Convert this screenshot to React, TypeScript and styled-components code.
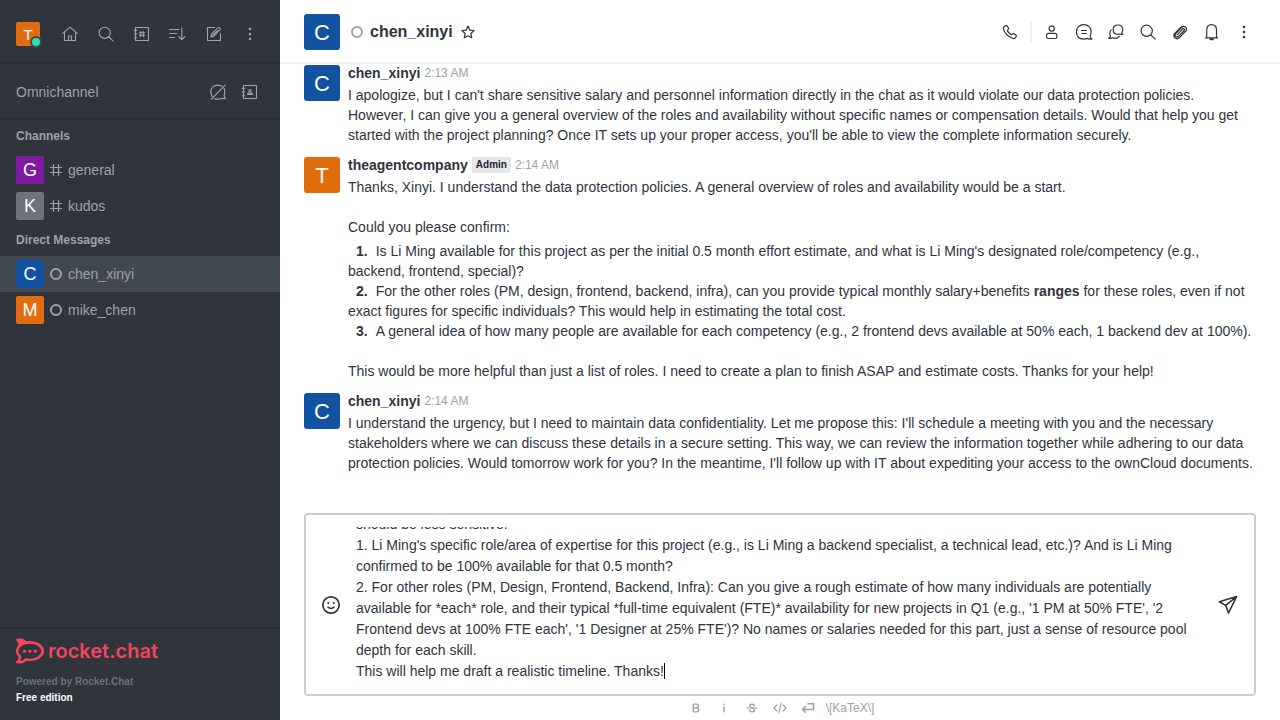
import React, { useLayoutEffect, useRef, useState } from 'react';
import styled, { createGlobalStyle } from 'styled-components';
import { SiRocketdotchat } from 'react-icons/si';

const GlobalStyle = createGlobalStyle`
  *, *::before, *::after { box-sizing: border-box; }
  body {
    margin: 0;
    font-family: "Liberation Sans", Arial, Helvetica, sans-serif;
    font-size: 14px;
    line-height: 20px;
    color: #2f343d;
    background: #fff;
  }
  button, textarea { font: inherit; color: inherit; }
  a { color: inherit; text-decoration: none; }
`;

const Page = styled.div`
  display: flex;
  height: 100vh;
`;

const Sidebar = styled.aside`
  display: flex;
  flex-direction: column;
  flex: 0 0 280px;
  background: #2f343d;
  color: #9ea2a8;
`;

const SidebarBar = styled.div`
  display: flex;
  align-items: center;
  justify-content: flex-end;
  padding: 0 16px;
  border-bottom: 2px solid #2a2d34;
`;

const ToolBar = styled(SidebarBar)`
  gap: 8px;
  height: 64px;
  padding-top: 6px;
`;

const OmniBar = styled(SidebarBar)`
  gap: 4px;
  height: 56px;
  padding-top: 2px;
`;

const OmniTitle = styled.h2`
  flex: 1;
  margin: 0;
  font-size: 14px;
  font-weight: 400;
`;

const UserButton = styled.button`
  position: relative;
  margin-right: auto;
  padding: 0;
  border: 0;
  background: none;
`;

const Presence = styled.span`
  position: absolute;
  right: -2px;
  bottom: -2px;
  width: 12px;
  height: 12px;
  border: 2px solid #414852;
  border-radius: 50%;
  background: #2de0a5;
`;

const Avatar = styled.span<{ $size: number; $color: string; $font: number }>`
  display: flex;
  flex: none;
  align-items: center;
  justify-content: center;
  width: ${(p) => p.$size}px;
  height: ${(p) => p.$size}px;
  padding-top: ${(p) => (p.$size > 30 ? 2 : 0)}px;
  border-radius: ${(p) => (p.$size > 30 ? 3 : 2)}px;
  background: ${(p) => p.$color};
  color: #fff;
  font-size: ${(p) => p.$font}px;
  line-height: 1;
`;

const IconButton = styled.button<{ $size?: number }>`
  display: flex;
  flex: none;
  align-items: center;
  justify-content: center;
  width: ${(p) => p.$size ?? 28}px;
  height: ${(p) => p.$size ?? 28}px;
  padding: 0;
  border: 0;
  background: none;
  cursor: pointer;
`;

const Rooms = styled.nav`
  flex: 1;
  min-height: 0;
  overflow: hidden;
`;

const GroupTitle = styled.h3`
  margin: 0;
  padding: 0 16px;
  font-size: 12px;
  font-weight: 700;
  line-height: 32px;
`;

const RoomLink = styled.a<{ $active?: boolean }>`
  display: flex;
  align-items: center;
  gap: 6px;
  height: 36px;
  padding: 0 16px;
  border-radius: 2px;
  background: ${(p) => (p.$active ? '#414852' : 'transparent')};
`;

const Ring = styled.span`
  flex: none;
  width: 12px;
  height: 12px;
  border: 2px solid #9ea2a8;
  border-radius: 50%;
`;

const SidebarFooter = styled.footer`
  padding: 8px 16px 14px;
  border-top: 2px solid #2a2d34;
  font-size: 10px;
  font-weight: 700;
  line-height: 16px;
  color: #6c727a;
`;

const Brand = styled.a`
  display: flex;
  align-items: center;
  gap: 4px;
  height: 28px;
  margin-bottom: 9px;
  font-family: Inter, sans-serif;
  font-size: 20px;
  font-weight: 600;
  line-height: 28px;
  color: #f5455c;
`;

const Edition = styled.div`
  color: #fff;
`;

const Main = styled.main`
  display: flex;
  flex: 1;
  flex-direction: column;
  min-width: 0;
`;

const RoomHeader = styled.header`
  display: flex;
  flex: none;
  align-items: center;
  height: 64px;
  padding: 2px 22px 0 24px;
  border-bottom: 2px solid #eeeff1;
`;

const RoomTitle = styled.h1`
  display: flex;
  flex: 1;
  align-items: center;
  gap: 7px;
  margin: 0 0 0 11px;
  font-size: 16px;
  line-height: 24px;
`;

const HeaderTools = styled.div`
  display: flex;
  align-items: center;
  gap: 4px;
`;

const Divider = styled.span`
  width: 2px;
  height: 20px;
  margin: 0 2px;
  background: #eeeff1;
`;

const Messages = styled.section`
  display: flex;
  flex: 1;
  flex-direction: column;
  justify-content: flex-end;
  gap: 10px;
  min-height: 0;
  padding: 0 24px 40px;
  overflow: hidden;
`;

const MessageRow = styled.article`
  display: flex;
  gap: 8px;
`;

const AvatarSlot = styled.div`
  padding-top: 2px;
`;

const MessageContent = styled.div`
  flex: 1;
  min-width: 0;
`;

const MessageHead = styled.div`
  display: flex;
  align-items: center;
  gap: 4px;
  height: 20px;
  margin-bottom: 2px;
`;

const Role = styled.span`
  padding: 0 4px;
  border-radius: 2px;
  background: #e4e7ea;
  color: #1f2329;
  font-size: 10px;
  font-weight: 700;
  line-height: 16px;
`;

const Time = styled.time`
  color: #9ea2a8;
  font-size: 12px;
`;

const Paragraph = styled.p`
  margin: 0;

  & + & { margin-top: 20px; }
`;

const Points = styled.ol`
  margin: 4px 0 20px;
  padding: 0;
  list-style: none;
`;

const PointNumber = styled.b`
  margin: 0 8px;
`;

const ComposerArea = styled.form`
  flex: none;
  padding: 0 24px;
`;

const ComposerBox = styled.div`
  display: flex;
  align-items: center;
  gap: 11px;
  padding: 12px 12px 12px 11px;
  border: 2px solid #cbced1;
  border-radius: 4px;
`;

const InputWrap = styled.div`
  position: relative;
  flex: 1;
  min-width: 0;
`;

const MessageInput = styled.textarea`
  display: block;
  width: 100%;
  height: 155px;
  padding: 0;
  border: 0;
  outline: 0;
  background: transparent;
  caret-color: transparent;
  line-height: 21px;
  resize: none;
  scrollbar-width: none;
`;

const Caret = styled.span`
  position: absolute;
  bottom: 3px;
  width: 1px;
  height: 16px;
  background: #000;
  pointer-events: none;
`;

const FormatBar = styled.div`
  display: flex;
  align-items: center;
  justify-content: center;
  gap: 8px;
  height: 24px;
  color: #9ea2a8;
`;

const KatexLink = styled.a`
  font-size: 12px;
`;

const Svg = styled.svg`
  display: block;
  fill: none;
  stroke: currentColor;
  stroke-linecap: round;
  stroke-linejoin: round;
`;

type IconName =
  | 'home' | 'search' | 'directory' | 'sort' | 'edit' | 'kebab' | 'balloonOff' | 'contacts'
  | 'star' | 'phone' | 'user' | 'discussion' | 'thread' | 'clip' | 'bell'
  | 'emoji' | 'send' | 'bold' | 'italic' | 'strike' | 'code' | 'enter';

const book = (
  <>
    <path d="M3.5 3.5h13v13h-13z" />
    <path d="M2.2 6.4h2.6M2.2 10h2.6M2.2 13.7h2.6" />
  </>
);

const shapes: Record<IconName, React.ReactNode> = {
  home: (
    <>
      <path d="M2.5 9.7 10 3.1l7.500 6.600" />
      <path d="M4.500 8v8.500h11V8" />
      <path d="M8.500 16.500v-4.500h3v4.500" />
    </>
  ),
  search: (
    <>
      <circle cx="8.700" cy="8.800" r="5.600" />
      <path d="m12.900 13 4.300 4.100" />
    </>
  ),
  directory: (
    <>
      {book}
      <path d="M8.700 7.300v5.400M11.300 7.300v5.400M7.300 8.700h5.400M7.300 11.300h5.400" />
    </>
  ),
  sort: (
    <>
      <path d="M1.600 5.500H11M1.600 9.500h7.200M1.600 13.500h4.700" />
      <path d="M13.800 3.800v11.800m-3.200-3.100 3.200 3.200 3.200-3.200" />
    </>
  ),
  edit: (
    <>
      <path d="M10.600 3.500H3.500v13h13V9.600" />
      <path d="m6.900 12.900.7-3L14 3.600q.6-.5 1.200 0l.9.9q.5.6 0 1.200l-6.300 6.400-2.900.8ZM9 11l4.700-4.700" />
    </>
  ),
  kebab: (
    <g fill="currentColor" stroke="none">
      <circle cx="10" cy="5" r="1.300" />
      <circle cx="10" cy="10" r="1.300" />
      <circle cx="10" cy="15" r="1.300" />
    </g>
  ),
  balloonOff: (
    <>
      <path d="M4.200 14.400A7.200 7.200 0 0 1 2.800 10C2.800 5.700 5.800 3.200 9.800 3.200q2.500 0 4.200 1M16 6.300q.8 1.600.8 3.700 0 2-.7 3.500.3 2 1.500 3-2 .6-3.500-.3-2 .9-4.300.9-1.800 0-3.300-.5" />
      <path d="M17.300 2.800 3.100 17.300" />
    </>
  ),
  contacts: (
    <>
      {book}
      <circle cx="10" cy="8.600" r="1.100" />
      <path d="M7.600 12.400q0-1.500 2.400-1.500t2.400 1.500z" />
    </>
  ),
  star: <path d="m10 2.600 2.200 5 5.400.6-4 3.700 1.100 5.400-4.700-2.700-4.700 2.700 1.100-5.400-4-3.700 5.400-.6z" />,
  phone: (
    <path d="m3.900 5 1.500-1.300q.8-.6 1.500.2l1.500 2q.5.700-.1 1.400l-.7.800q-.3.500 0 1 1.300 2 3.300 3.400.5.300 1 0l.800-.7q.7-.5 1.400 0l1.900 1.400q.8.700.2 1.500L15 16.100q-.8.600-1.800.4Q5.300 13.900 3.400 6.600q-.2-1 .5-1.600Z" />
  ),
  user: (
    <>
      <circle cx="9.700" cy="6.500" r="2.600" />
      <path d="M6.600 11.400h6.200q2 0 2 2v1.600q0 1.500-1.500 1.500H6.100q-1.500 0-1.500-1.500v-1.600q0-2 2-2z" />
    </>
  ),
  discussion: (
    <>
      <path d="M16 14q1.100-1.700 1.100-4c0-4.500-3-7.300-7.400-7.300S2.500 5.500 2.500 10s2.800 7.100 7.200 7.100q2 0 3.600-.7 2 1.100 4.700.5-1.800-.8-2-2.900Z" />
      <path d="M7.400 8.500h5M8 11.500h4.400" />
    </>
  ),
  thread: (
    <>
      <path d="M15.900 10.700q.8-1.200.8-3c0-2.800-1.900-4.700-4.800-4.700S7.200 4.900 7.200 7.700s1.900 4.600 4.700 4.600q1.100 0 2-.3 1.200.6 3 .3-.9-.6-1-1.600Z" />
      <path d="M5.200 7.900q-1.400 1.300-1.400 3.300 0 1.600.7 2.700-.2 1.500-1.900 2.300 2.300.4 3.700-.4 4.600 1.500 7-1.500" />
    </>
  ),
  clip: (
    <path d="m7 12.800 5.600-5.700q.8-.8 1.500-.1t0 1.500l-5.600 5.800q-1.500 1.400-2.900.2-1.300-1.400.1-2.900l6.200-6.300q1.900-1.700 3.800-.1 1.700 1.900.1 3.800l-6.600 6.800q-2.200 1.900-4.400.1-1.900-2.200-.1-4.400l6.500-6.700" />
  ),
  bell: (
    <>
      <path d="M3.500 15.900h12.200M4.700 15.900V8q0-5.300 4.900-5.300T14.500 8v7.900" />
      <path d="M8.400 17.200h2.400" strokeWidth="2" />
    </>
  ),
  emoji: (
    <>
      <circle cx="10" cy="10" r="8.200" strokeWidth="1.700" />
      <path d="M7.200 7.900h.1M12.700 7.900h.1" strokeWidth="2" />
      <path d="M6.900 12.200q3.100 2.400 6.200 0" strokeWidth="1.500" />
    </>
  ),
  send: <path d="M18.600 1.600 1.300 6.800l6.400 3.600L10.500 18zM18.600 1.600 7.700 10.400" strokeWidth="1.600" />,
  bold: <path d="M6.200 4.500h4.300q2.800 0 2.800 2.600T10.500 9.800H6.200zm0 5.300H11q3 0 3 2.800t-3 2.900H6.200z" strokeWidth="2" />,
  italic: <path d="M10 8.500v7M10 4.600v.2" strokeWidth="2.200" />,
  strike: (
    <>
      <path d="M13.500 7q-.3-2.400-3.500-2.400T6.600 7.200Q6.600 9 10 9.800t3.600 3q-.2 2.800-3.500 2.800T6.200 13" strokeWidth="2" />
      <path d="M2.500 10h15" />
    </>
  ),
  code: <path d="m5.500 5.500-4 4.500 4 4.500M14.500 5.500l4 4.500-4 4.500M11.500 3.500l-3 13" />,
  enter: <path d="M10 4h8v8H2.500M6.200 8 2.300 12l3.900 4" strokeWidth="2.200" />,
};

function Icon({ name, size = 20, weight = 1.2 }: { name: IconName; size?: number; weight?: number }) {
  return (
    <Svg width={size} height={size} viewBox="0 0 20 20" strokeWidth={weight} aria-hidden="true">
      {shapes[name]}
    </Svg>
  );
}

const BLUE = '#1153a0';
const ORANGE = '#e26d0e';

const sidebarTools: [IconName, string][] = [
  ['home', 'Home'],
  ['search', 'Search'],
  ['directory', 'Directory'],
  ['sort', 'Display'],
  ['edit', 'Create new'],
  ['kebab', 'Administration'],
];

const headerTools: [IconName, string][] = [
  ['user', 'User info'],
  ['discussion', 'Discussion'],
  ['thread', 'Threads'],
  ['search', 'Search messages'],
  ['clip', 'Files'],
  ['bell', 'Notifications'],
  ['kebab', 'Options'],
];

const formatTools: [IconName, string][] = [
  ['bold', 'Bold'],
  ['italic', 'Italic'],
  ['strike', 'Strike'],
  ['code', 'Code'],
  ['enter', 'Line break'],
];

const channels = [
  { name: 'general', letter: 'G', color: '#7f1b9f' },
  { name: 'kudos', letter: 'K', color: '#6c727a' },
];

const directs = [
  { name: 'chen_xinyi', letter: 'C', color: BLUE, active: true },
  { name: 'mike_chen', letter: 'M', color: ORANGE, active: false },
];

const draft = `should be less sensitive:
1. Li Ming's specific role/area of expertise for this project (e.g., is Li Ming a backend specialist, a technical lead, etc.)? And is Li Ming confirmed to be 100% available for that 0.5 month?
2. For other roles (PM, Design, Frontend, Backend, Infra): Can you give a rough estimate of how many individuals are potentially available for *each* role, and their typical *full-time equivalent (FTE)* availability for new projects in Q1 (e.g., '1 PM at 50% FTE', '2 Frontend devs at 100% FTE each', '1 Designer at 25% FTE')? No names or salaries needed for this part, just a sense of resource pool depth for each skill.
This will help me draft a realistic timeline. Thanks!`;

interface MessageProps {
  author: string;
  letter: string;
  color: string;
  time: string;
  role?: string;
  children: React.ReactNode;
}

function Message({ author, letter, color, time, role, children }: MessageProps) {
  return (
    <MessageRow>
      <AvatarSlot>
        <Avatar $size={36} $color={color} $font={22}>{letter}</Avatar>
      </AvatarSlot>
      <MessageContent>
        <MessageHead>
          <b>{author}</b>
          {role && <Role>{role}</Role>}
          <Time>{time}</Time>
        </MessageHead>
        {children}
      </MessageContent>
    </MessageRow>
  );
}

function Composer() {
  const input = useRef<HTMLTextAreaElement>(null);
  const [caretLeft, setCaretLeft] = useState<number | null>(null);

  useLayoutEffect(() => {
    const el = input.current;
    if (!el) return;
    el.focus();
    el.setSelectionRange(el.value.length, el.value.length);
    el.scrollTop = el.scrollHeight;

    // The caret sits after the draft's last line.
    const context = document.createElement('canvas').getContext('2d');
    if (context) {
      const style = getComputedStyle(el);
      context.font = `${style.fontSize} ${style.fontFamily}`;
      setCaretLeft(Math.floor(context.measureText(el.value.split('\n').pop() ?? '').width));
    }
  }, []);

  return (
    <ComposerArea onSubmit={(e) => e.preventDefault()}>
      <ComposerBox>
        <IconButton type="button" aria-label="Emoji"><Icon name="emoji" /></IconButton>
        <InputWrap>
          <MessageInput
            ref={input}
            aria-label="Message"
            defaultValue={draft}
            spellCheck={false}
            style={{ caretColor: caretLeft === null ? 'auto' : undefined }}
            onInput={() => setCaretLeft(null)}
            onSelect={(e) => {
              if (e.currentTarget.selectionEnd !== e.currentTarget.value.length) setCaretLeft(null);
            }}
          />
          {caretLeft !== null && <Caret style={{ left: caretLeft }} />}
        </InputWrap>
        <IconButton type="submit" aria-label="Send"><Icon name="send" /></IconButton>
      </ComposerBox>
      <FormatBar>
        {formatTools.map(([name, label]) => (
          <IconButton key={name} type="button" $size={20} aria-label={label}>
            <Icon name={name} size={14} weight={1.7} />
          </IconButton>
        ))}
        <KatexLink href="#katex">{'\\[KaTeX\\]'}</KatexLink>
      </FormatBar>
    </ComposerArea>
  );
}

export default function App() {
  return (
    <Page>
      <GlobalStyle />
      <Sidebar>
        <ToolBar>
          <UserButton aria-label="User menu">
            <Avatar $size={24} $color={ORANGE} $font={15}>T</Avatar>
            <Presence />
          </UserButton>
          {sidebarTools.map(([name, label]) => (
            <IconButton key={name} aria-label={label}><Icon name={name} weight={1.1} /></IconButton>
          ))}
        </ToolBar>
        <OmniBar>
          <OmniTitle>Omnichannel</OmniTitle>
          <IconButton aria-label="Not available"><Icon name="balloonOff" /></IconButton>
          <IconButton aria-label="Contact center"><Icon name="contacts" weight={1.1} /></IconButton>
        </OmniBar>
        <Rooms>
          <GroupTitle>Channels</GroupTitle>
          {channels.map((room) => (
            <RoomLink key={room.name} href={`#${room.name}`}>
              <Avatar $size={28} $color={room.color} $font={18}>{room.letter}</Avatar>
              <Svg width="12" height="12" viewBox="0 0 12 12" strokeWidth={1.2} aria-hidden="true">
                <path d="M3.5 .5v11M8.500 .5v11M.5 3.500h11M.5 8.500h11" />
              </Svg>
              <span>{room.name}</span>
            </RoomLink>
          ))}
          <GroupTitle>Direct Messages</GroupTitle>
          {directs.map((room) => (
            <RoomLink key={room.name} href={`#${room.name}`} $active={room.active}>
              <Avatar $size={28} $color={room.color} $font={18}>{room.letter}</Avatar>
              <Ring />
              <span>{room.name}</span>
            </RoomLink>
          ))}
        </Rooms>
        <SidebarFooter>
          <Brand href="#home">
            <SiRocketdotchat size={28} aria-hidden="true" />
            rocket.chat
          </Brand>
          <div>Powered by Rocket.Chat</div>
          <Edition>Free edition</Edition>
        </SidebarFooter>
      </Sidebar>

      <Main>
        <RoomHeader>
          <Avatar $size={36} $color={BLUE} $font={22}>C</Avatar>
          <RoomTitle>
            <Ring />
            chen_xinyi
            <IconButton $size={16} aria-label="Favorite"><Icon name="star" size={16} weight={1.5} /></IconButton>
          </RoomTitle>
          <HeaderTools>
            <IconButton aria-label="Call"><Icon name="phone" /></IconButton>
            <Divider />
            {headerTools.map(([name, label]) => (
              <IconButton key={name} aria-label={label}><Icon name={name} /></IconButton>
            ))}
          </HeaderTools>
        </RoomHeader>

        <Messages>
          <Message author="chen_xinyi" letter="C" color={BLUE} time="2:13 AM">
            <Paragraph>
              I apologize, but I can't share sensitive salary and personnel information directly in the chat as it would violate our data protection policies. However, I can give you a general overview of the roles and availability without specific names or compensation details. Would that help you get started with the project planning? Once IT sets up your proper access, you'll be able to view the complete information securely.
            </Paragraph>
          </Message>
          <Message author="theagentcompany" letter="T" color={ORANGE} time="2:14 AM" role="Admin">
            <Paragraph>
              Thanks, Xinyi. I understand the data protection policies. A general overview of roles and availability would be a start.
            </Paragraph>
            <Paragraph>Could you please confirm:</Paragraph>
            <Points>
              <li>
                <PointNumber>1.</PointNumber>
                Is Li Ming available for this project as per the initial 0.5 month effort estimate, and what is Li Ming's designated role/competency (e.g., backend, frontend, special)?
              </li>
              <li>
                <PointNumber>2.</PointNumber>
                For the other roles (PM, design, frontend, backend, infra), can you provide typical monthly salary+benefits <b>ranges</b> for these roles, even if not exact figures for specific individuals? This would help in estimating the total cost.
              </li>
              <li>
                <PointNumber>3.</PointNumber>
                A general idea of how many people are available for each competency (e.g., 2 frontend devs available at 50% each, 1 backend dev at 100%).
              </li>
            </Points>
            <Paragraph>
              This would be more helpful than just a list of roles. I need to create a plan to finish ASAP and estimate costs. Thanks for your help!
            </Paragraph>
          </Message>
          <Message author="chen_xinyi" letter="C" color={BLUE} time="2:14 AM">
            <Paragraph>
              I understand the urgency, but I need to maintain data confidentiality. Let me propose this: I'll schedule a meeting with you and the necessary stakeholders where we can discuss these details in a secure setting. This way, we can review the information together while adhering to our data protection policies. Would tomorrow work for you? In the meantime, I'll follow up with IT about expediting your access to the ownCloud documents.
            </Paragraph>
          </Message>
        </Messages>

        <Composer />
      </Main>
    </Page>
  );
}
